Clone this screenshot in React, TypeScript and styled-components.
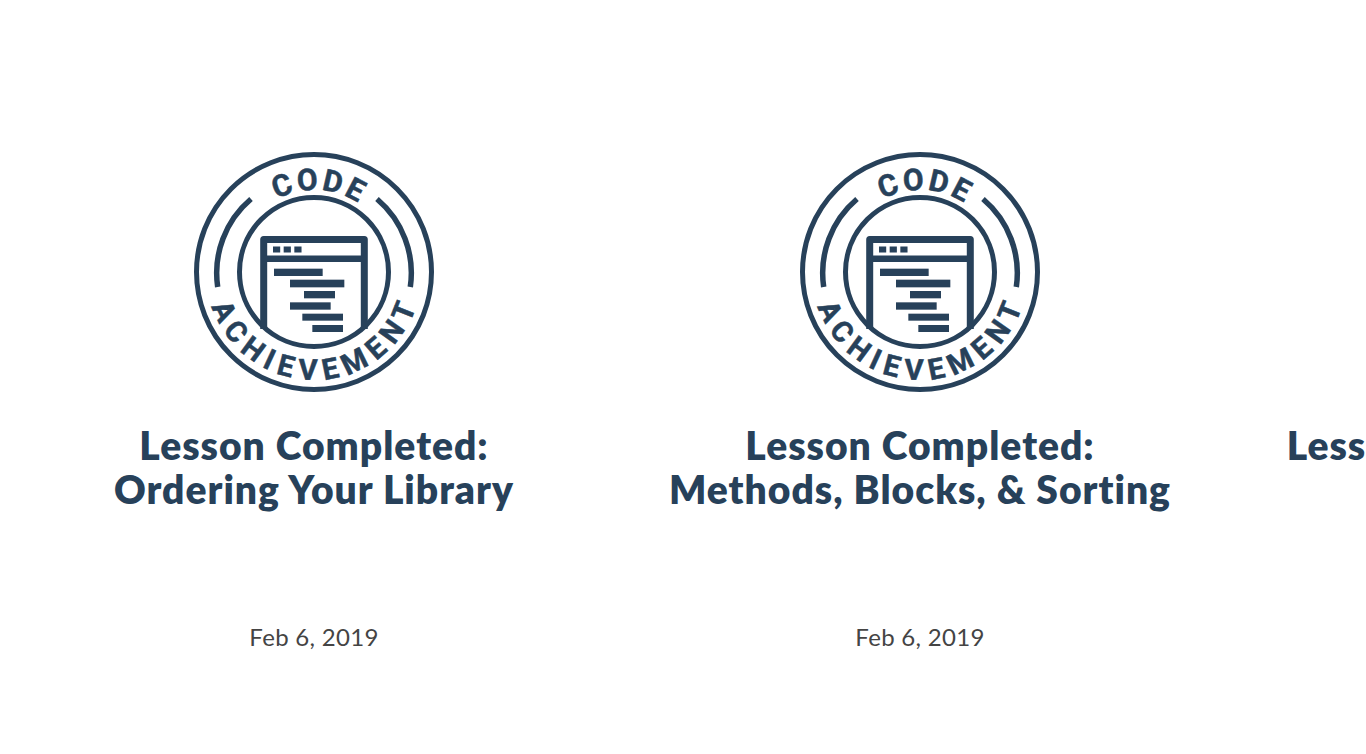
import React from "react";
import styled, { createGlobalStyle } from "styled-components";

const Global = createGlobalStyle`
  html, body { margin: 0; padding: 0; background: #fff; overflow: hidden; }
  body { font-family: "Lato", "Noto Sans", sans-serif; }
`;

const Track = styled.main`
  display: flex;
  width: 1366px;
  height: 754px;
  overflow: hidden;
  padding: 152px 0 0 11px;
  box-sizing: border-box;
`;

const Card = styled.article`
  flex: 0 0 606px;
  display: flex;
  flex-direction: column;
  align-items: center;
`;

const Badge = styled.svg`
  display: block;
  width: 240px;
  height: 240px;
  flex: none;
`;

const Ring = styled.circle`
  fill: none;
  stroke: #27415a;
`;

const Line = styled.path`
  fill: none;
  stroke: #27415a;
`;

const Block = styled.rect`
  fill: #27415a;
`;

const BadgeText = styled.text`
  fill: #27415a;
  stroke: #27415a;
  stroke-width: 0.5px;
  font-family: "Roboto", "Liberation Sans", sans-serif;
  font-weight: 700;
`;

const Title = styled.h2`
  margin: 31px 0 0;
  height: 202px;
  flex: none;
  white-space: nowrap;
  text-align: center;
  font-family: "Lato", "Noto Sans", sans-serif;
  font-size: 39px;
  letter-spacing: 1px;
  line-height: 44px;
  font-weight: 800;
  color: #27415a;
`;

const DateLabel = styled.time`
  display: block;
  font-family: "Lato", "Noto Sans", sans-serif;
  font-size: 24px;
  letter-spacing: 0.3px;
  line-height: 24px;
  color: #444;
`;

const bars = [
  [270, 380, 146, 22],
  [318, 413, 163, 23],
  [360, 447, 93, 22],
  [318, 481, 122, 22],
  [355, 515, 122, 21],
  [385, 549, 92, 21],
];
const dots = [267, 299, 331];

const AchievementBadge = ({ id }: { id: string }) => (
  <Badge viewBox="0 0 240 240" aria-label="Code Achievement">
    <defs>
      <path id={`${id}-top`} d="M 38 120 A 82 82 0 0 1 202 120" />
      <path id={`${id}-bottom`} d="M 12 120 A 108 108 0 0 0 228 120" />
    </defs>
    <Ring cx="120" cy="120" r="117.5" strokeWidth="5" />
    <Ring cx="120" cy="120" r="74.5" strokeWidth="5" />
    <Line strokeWidth="5.5" d="M 23.7 135 A 97 97 0 0 1 57 47" />
    <Line strokeWidth="5.5" d="M 216.3 135 A 97 97 0 0 0 183 47" />
    <Line strokeWidth="7" strokeLinejoin="round" d="M 69.7 177 V 87.5 H 170.3 V 177" />
    <Line strokeWidth="6.5" d="M 70 106.7 H 170" />
    {dots.map((x) => (
      <Block key={x} x={x / 3 - 10} y={94.5} width={7.2} height={6} />
    ))}
    {bars.map(([x, y, w, h]) => (
      <Block key={y} x={x / 3 - 10} y={y / 3 - 10} width={w / 3} height={h / 3} />
    ))}
    <BadgeText fontSize="30" letterSpacing="3">
      <textPath href={`#${id}-top`} startOffset="52%" textAnchor="middle">CODE</textPath>
    </BadgeText>
    <BadgeText fontSize="29" letterSpacing="7">
      <textPath href={`#${id}-bottom`} startOffset="51%" textAnchor="middle">ACHIEVEMENT</textPath>
    </BadgeText>
  </Badge>
);

export default function App() {
  return (
    <>
      <Global />
      <Track>
        <Card>
          <AchievementBadge id="a" />
          <Title>Lesson Completed:<br />Ordering Your Library</Title>
          <DateLabel>Feb 6, 2019</DateLabel>
        </Card>
        <Card>
          <AchievementBadge id="b" />
          <Title>Lesson Completed:<br />Methods, Blocks, &amp; Sorting</Title>
          <DateLabel>Feb 6, 2019</DateLabel>
        </Card>
        <Card>
          <AchievementBadge id="c" />
          <Title>Lesson Completed: Arrays</Title>
          <DateLabel>Feb 6, 2019</DateLabel>
        </Card>
      </Track>
    </>
  );
}
